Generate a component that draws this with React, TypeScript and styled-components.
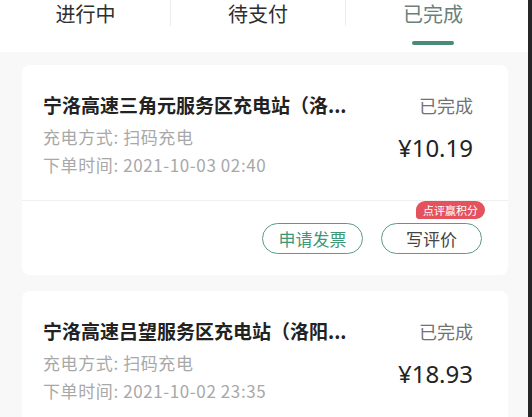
import React from 'react';
import styled, { createGlobalStyle } from 'styled-components';

const GlobalStyle = createGlobalStyle`
  html, body {
    margin: 0;
    padding: 0;
    background: #f8f8f8;
  }
  body {
    font-family: "Noto Sans CJK SC", "Noto Sans", sans-serif;
    -webkit-font-smoothing: antialiased;
  }
`;

const Page = styled.div`
  width: 528px;
  height: 417px;
  overflow: hidden;
  background: #f8f8f8;
  border-right: 4px solid #262626;
`;

const TabBar = styled.div`
  display: grid;
  grid-template-columns: 170px 175px 175px;
  height: 52px;
  background: #ffffff;
`;

const Tab = styled.div`
  display: flex;
  flex-direction: column;
  align-items: center;
`;

const TabLabel = styled.div<{ $active?: boolean; $divider?: boolean }>`
  width: 100%;
  padding-top: 1px;
  text-align: center;
  font-size: 20px;
  line-height: 25px;
  color: ${p => (p.$active ? '#6a8179' : '#2e2e2e')};
  border-left: ${p => (p.$divider ? '1px solid #ececec' : '1px solid transparent')};
  box-sizing: border-box;
`;

const TabUnderline = styled.div<{ $active?: boolean }>`
  width: 42px;
  height: 4px;
  margin-top: 15px;
  border-radius: 2px;
  background: ${p => (p.$active ? '#4a8a78' : 'transparent')};
`;

const List = styled.div`
  display: flex;
  flex-direction: column;
  gap: 16px;
  padding: 13px 20px 0 22px;
`;

const Card = styled.div`
  background: #ffffff;
  border-radius: 8px;
`;

const CardBody = styled.div`
  display: flex;
  justify-content: space-between;
  padding: 28px 35px 21px 21px;
`;

const Info = styled.div`
  display: flex;
  flex-direction: column;
`;

const Title = styled.div`
  font-size: 19px;
  line-height: 24px;
  font-weight: 700;
  color: #222222;
  margin-bottom: 6px;
  white-space: nowrap;
`;

const Meta = styled.div`
  font-size: 17px;
  line-height: 28px;
  letter-spacing: 0.6px;
  color: #a8a8a8;
`;

const Side = styled.div`
  display: flex;
  flex-direction: column;
  align-items: flex-end;
`;

const Status = styled.div`
  font-size: 18px;
  line-height: 24px;
  color: #727272;
`;

const Price = styled.div`
  margin-top: 16px;
  font-family: "Noto Sans", "Noto Sans CJK SC", sans-serif;
  font-size: 24px;
  line-height: 30px;
  font-weight: 400;
  color: #232323;
`;

const CardFooter = styled.div`
  display: flex;
  justify-content: flex-end;
  gap: 18px;
  padding: 22px 26px 21px 0;
  border-top: 1px solid #efefef;
`;

const PillButton = styled.button<{ $primary?: boolean }>`
  position: relative;
  width: 101px;
  height: 31px;
  box-sizing: border-box;
  border: 1.5px solid #5c9a86;
  border-radius: 16px;
  background: #ffffff;
  font-family: "Noto Sans CJK SC", sans-serif;
  font-size: 17px;
  line-height: 1;
  color: ${p => (p.$primary ? '#3d9878' : '#454545')};
  padding: 0;
`;

const Badge = styled.span`
  position: absolute;
  top: -23px;
  right: -4px;
  height: 18px;
  padding: 0 7px;
  border-radius: 9px 9px 9px 3px;
  background: #e4525d;
  color: #ffffff;
  font-size: 11px;
  line-height: 18px;
  white-space: nowrap;
`;

type Order = {
  title: string;
  method: string;
  time: string;
  price: string;
  actions: boolean;
};

const orders: Order[] = [
  {
    title: '宁洛高速三角元服务区充电站（洛...',
    method: '充电方式: 扫码充电',
    time: '下单时间: 2021-10-03 02:40',
    price: '¥10.19',
    actions: true,
  },
  {
    title: '宁洛高速吕望服务区充电站（洛阳...',
    method: '充电方式: 扫码充电',
    time: '下单时间: 2021-10-02 23:35',
    price: '¥18.93',
    actions: false,
  },
];

const tabs = ['进行中', '待支付', '已完成'];

const App = () => {
  return (
    <>
      <GlobalStyle />
      <Page>
        <TabBar>
          {tabs.map((t, i) => (
            <Tab key={t}>
              <TabLabel $active={i === 2} $divider={i > 0}>{t}</TabLabel>
              <TabUnderline $active={i === 2} />
            </Tab>
          ))}
        </TabBar>

        <List>
          {orders.map(o => (
            <Card key={o.time}>
              <CardBody>
                <Info>
                  <Title>{o.title}</Title>
                  <Meta>{o.method}</Meta>
                  <Meta>{o.time}</Meta>
                </Info>
                <Side>
                  <Status>已完成</Status>
                  <Price>{o.price}</Price>
                </Side>
              </CardBody>
              {o.actions && (
                <CardFooter>
                  <PillButton $primary>申请发票</PillButton>
                  <PillButton>
                    写评价
                    <Badge>点评赢积分</Badge>
                  </PillButton>
                </CardFooter>
              )}
            </Card>
          ))}
        </List>
      </Page>
    </>
  );
};

export default App;
